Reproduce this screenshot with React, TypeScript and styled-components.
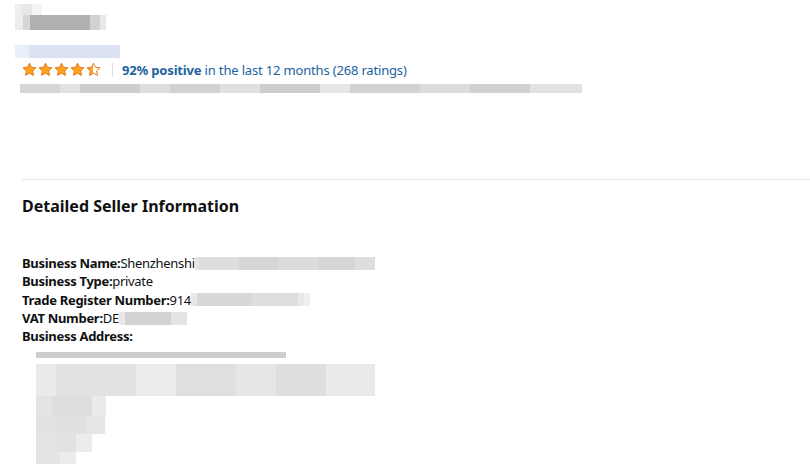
import React from "react";
import styled, { createGlobalStyle } from "styled-components";

const Global = createGlobalStyle`
  html, body { margin: 0; padding: 0; background: #fff; }
  body { font-family: "Noto Sans", "Open Sans", sans-serif; color: #0f1111; }
`;

const Page = styled.div`
  width: 810px;
  height: 464px;
  overflow: hidden;
  position: relative;
`;

const Top = styled.section`
  height: 179px;
  padding-left: 15px;
  box-sizing: border-box;
  display: flex;
  flex-direction: column;
`;

const BlurRow = styled.div<{ $h: number; $mt?: number; $ml?: number }>`
  display: flex;
  height: ${(p) => p.$h}px;
  margin-top: ${(p) => p.$mt ?? 0}px;
  margin-left: ${(p) => p.$ml ?? 0}px;
`;

const Cell = styled.div<{ $w: number; $c: string }>`
  width: ${(p) => p.$w}px;
  height: 100%;
  background: ${(p) => p.$c};
  flex: none;
`;

type Seg = [number, string];

const Blur: React.FC<{ segs: Seg[]; h: number; mt?: number; ml?: number }> = ({ segs, h, mt, ml }) => (
  <BlurRow $h={h} $mt={mt} $ml={ml}>
    {segs.map(([w, c], i) => (
      <Cell key={i} $w={w} $c={c} />
    ))}
  </BlurRow>
);

const RatingRow = styled.div`
  display: flex;
  align-items: center;
  height: 17px;
  margin-top: 3px;
  margin-left: 7px;
`;

const Stars = styled.div`
  display: flex;
  gap: 1px;
`;

const Sep = styled.span`
  width: 1px;
  height: 14px;
  background: #ddd;
  margin: 0 9px 0 11px;
`;

const RatingText = styled.span`
  font-size: 13px;
  letter-spacing: -0.17px;
  color: #2162a1;
  white-space: nowrap;
  b { font-weight: 700; }
`;

const Divider = styled.hr`
  margin: 0 0 0 22px;
  border: none;
  border-top: 1px solid #e7e7e7;
  height: 0;
`;

const Details = styled.section`
  padding-left: 22px;
`;

const Heading = styled.h2`
  margin: 0;
  padding-top: 14px;
  font-size: 16px;
  font-weight: 700;
  line-height: 24px;
  color: #0f1111;
`;

const List = styled.div`
  margin-top: 36px;
  font-size: 13px;
  line-height: 18.3px;
  letter-spacing: -0.3px;
`;

const Line = styled.div`
  display: flex;
  align-items: center;
  white-space: nowrap;
  b { font-weight: 700; }
`;

const Address = styled.div`
  padding-left: 14px;
  display: flex;
  flex-direction: column;
  margin-top: 1px;
`;

const AddrLine = styled.div`
  height: 18px;
  display: flex;
  align-items: center;
`;

const Star: React.FC<{ half?: boolean }> = ({ half }) => (
  <svg width="15" height="15" viewBox="0 0 24 24">
    <defs>
      <linearGradient id="hs">
        <stop offset="50%" stopColor="#ffa41c" />
        <stop offset="50%" stopColor="#fff" />
      </linearGradient>
    </defs>
    <path
      d="M12 1.8l3.1 6.6 7.2.9-5.3 5 1.4 7.1L12 17.9l-6.4 3.5 1.4-7.1-5.3-5 7.2-.9z"
      fill={half ? "url(#hs)" : "#ffa41c"}
      stroke="#de7921"
      strokeWidth="1.6"
      strokeLinejoin="round"
    />
  </svg>
);

const g = (v: number) => `rgb(${v},${v},${v})`;

export default function App() {
  return (
    <Page>
      <Global />
      <Top>
        <Blur h={11} mt={4} segs={[[6, g(240)], [11, g(232)], [10, g(244)]]} />
        <Blur
          h={15}
          segs={[[8, g(236)], [7, g(214)], [60, g(176)], [10, g(210)], [6, g(232)]]}
        />
        <Blur
          h={13}
          mt={15}
          segs={[[14, "#e9eef8"], [91, "#dbe3f3"]]}
        />
        <RatingRow>
          <Stars>
            <Star />
            <Star />
            <Star />
            <Star />
            <Star half />
          </Stars>
          <Sep />
          <RatingText>
            <b>92% positive</b> in the last 12 months (268 ratings)
          </RatingText>
        </RatingRow>
        <Blur
          h={9}
          mt={6}
          ml={5}
          segs={[
            [40, g(214)], [20, g(226)], [60, g(206)], [30, g(222)], [50, g(210)],
            [40, g(224)], [60, g(205)], [30, g(230)], [70, g(210)], [50, g(220)],
            [60, g(208)], [52, g(226)],
          ]}
        />
      </Top>
      <Divider />
      <Details>
        <Heading>Detailed Seller Information</Heading>
        <List>
          <Line>
            <b>Business Name:</b>Shenzhenshi
            <Blur h={13} segs={[[4, g(230)], [40, g(222)], [40, g(214)], [40, g(220)], [36, g(214)], [20, g(222)]]} />
          </Line>
          <Line>
            <b>Business Type:</b>private
          </Line>
          <Line>
            <b>Trade Register Number:</b>914
            <Blur h={13} segs={[[6, g(232)], [55, g(216)], [46, g(222)], [6, g(232)], [6, g(240)]]} />
          </Line>
          <Line>
            <b>VAT Number:</b>DE
            <Blur h={13} segs={[[6, g(232)], [46, g(210)], [16, g(228)]]} />
          </Line>
          <Line>
            <b>Business Address:</b>
          </Line>
          <Address>
            <AddrLine>
              <Blur h={6} segs={[[250, g(206)]]} />
            </AddrLine>
            <Blur h={32} segs={[[20, g(234)], [80, g(226)], [40, g(236)], [60, g(224)], [40, g(230)], [50, g(222)], [49, g(234)]]} />
            <Blur h={20} segs={[[16, g(228)], [40, g(222)], [14, g(234)]]} />
            <Blur h={18} segs={[[20, g(226)], [30, g(224)], [19, g(230)]]} />
            <Blur h={18} segs={[[20, g(228)], [20, g(226)], [16, g(236)]]} />
            <Blur h={18} segs={[[24, g(228)], [16, g(236)]]} />
            <Blur h={12} segs={[[24, g(232)]]} />
          </Address>
        </List>
      </Details>
    </Page>
  );
}
